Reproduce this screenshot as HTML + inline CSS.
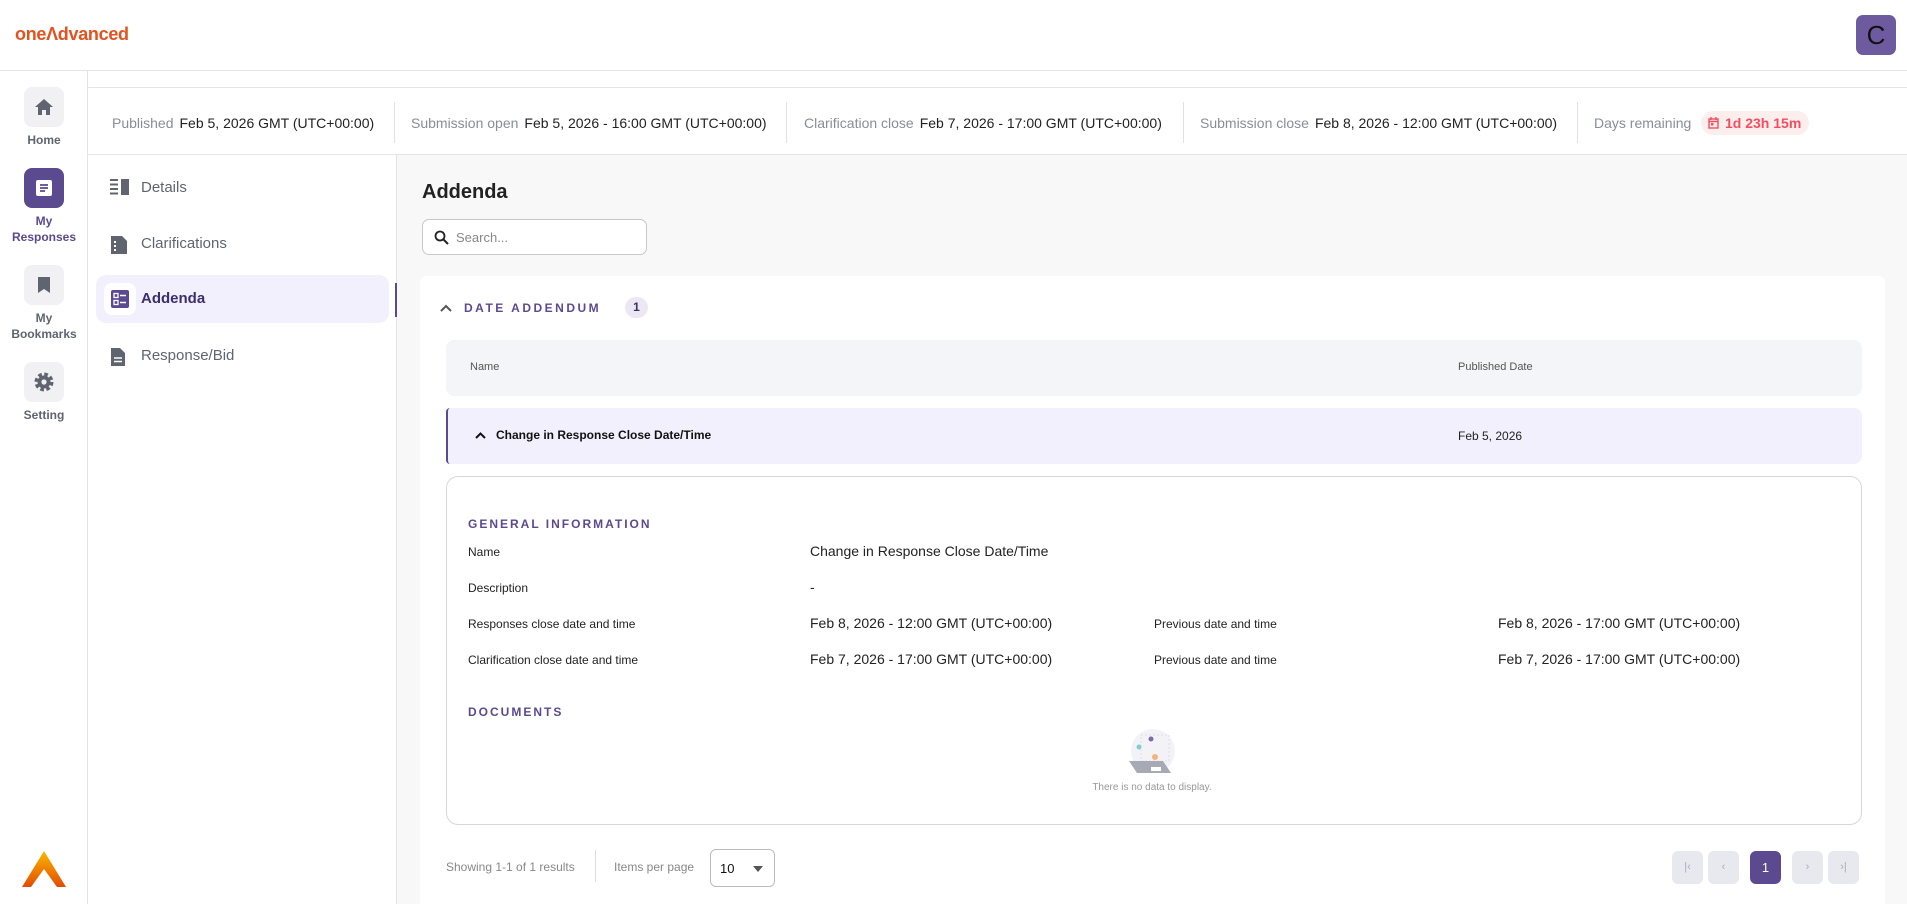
<!DOCTYPE html>
<html><head><meta charset="utf-8"><style>
*{box-sizing:border-box;margin:0;padding:0}
body{width:1907px;height:904px;overflow:hidden;font-family:"Liberation Sans",sans-serif;background:#fff;position:relative;color:#222}
.abs{position:absolute}
.hdr{left:0;top:0;width:1907px;height:71px;border-bottom:1px solid #e3e3ea;background:#fff}
.logo{left:15px;top:24px;font-size:18px;font-weight:bold;color:#e5511f;letter-spacing:-0.3px}
.avatar{left:1856px;top:15px;width:40px;height:40px;border-radius:7px;background:#6e5a9e;color:#111;font-size:26px;text-align:center;line-height:40px}
.rail{left:0;top:71px;width:88px;height:833px;border-right:1px solid #e3e3ea;background:#fff}
.rbox{position:absolute;left:24px;width:40px;height:40px;border-radius:8px;background:#f1f1f3;display:flex;align-items:center;justify-content:center}
.rlab{position:absolute;left:0;width:88px;text-align:center;font-size:12px;font-weight:bold;color:#5f6470;line-height:16px}
.strip{left:88px;top:87px;width:1819px;height:68px;border-top:1px solid #e3e3ea;border-bottom:1px solid #e3e3ea;background:#fff}
.info{position:absolute;top:27px;font-size:14px;color:#222;white-space:nowrap}
.info span{color:#8a8d96;margin-right:6px}
.sep{position:absolute;top:14px;width:1px;height:41px;background:#e0e0e6}
.subnav{left:88px;top:155px;width:309px;height:749px;border-right:1px solid #e3e3ea;background:#fff}
.sn{position:absolute;left:0;width:300px;height:48px;font-size:15px;color:#5f6470}
.sn .t{position:absolute;left:53px;top:15px}
.sn svg{position:absolute;left:22px;top:15px}
.main{left:397px;top:155px;width:1510px;height:749px;background:#f8f8f9}
.card{position:absolute;left:23px;top:121px;width:1465px;height:640px;background:#fff;border-radius:6px}
.th{position:absolute;left:26px;width:1416px;border-radius:8px}
.lbl{position:absolute;font-size:12px;color:#222}
.val{position:absolute;font-size:14px;color:#222}
.sec{position:absolute;left:21px;font-size:12px;font-weight:bold;letter-spacing:2px;color:#5b4a8f}
.pb{position:absolute;top:575px;width:31px;height:33px;border-radius:6px;background:#e8e9ee;color:#aab;font-size:11px;text-align:center;line-height:33px}
</style></head><body>
<div class="abs hdr"></div>
<div class="abs logo">one&#923;dvanced</div>
<div class="abs avatar">C</div>

<div class="abs rail">
 <div class="rbox" style="top:16px"><svg width="20" height="18" viewBox="0 0 20 18"><path d="M10 1L1 9h3v8h4v-5h4v5h4V9h3z" fill="#5f6470"/></svg></div>
 <div class="rlab" style="top:61px">Home</div>
 <div class="rbox" style="top:97px;background:#5b4a8f"><svg width="18" height="18" viewBox="0 0 18 18"><rect x="1" y="1" width="16" height="16" rx="2" fill="#fff"/><path d="M5 6h8M5 9h8M5 12h5" stroke="#5b4a8f" stroke-width="1.8"/></svg></div>
 <div class="rlab" style="top:142px;color:#5b4a8f">My<br>Responses</div>
 <div class="rbox" style="top:194px"><svg width="14" height="18" viewBox="0 0 14 18"><path d="M1 1h12v16l-6-4-6 4z" fill="#5f6470"/></svg></div>
 <div class="rlab" style="top:239px">My<br>Bookmarks</div>
 <div class="rbox" style="top:291px"><svg width="22" height="22" viewBox="0 0 22 22"><circle cx="11" cy="11" r="7.5" fill="none" stroke="#5f6470" stroke-width="4" stroke-dasharray="3.5 2.4"/><circle cx="11" cy="11" r="6.5" fill="#5f6470"/><circle cx="11" cy="11" r="2.6" fill="#f1f1f3"/></svg></div>
 <div class="rlab" style="top:336px">Setting</div>
 <svg style="position:absolute;left:22px;top:780px" width="44" height="36" viewBox="0 0 44 36"><defs><linearGradient id="g" x1="0" y1="0" x2="0" y2="1"><stop offset="0" stop-color="#fbb800"/><stop offset="1" stop-color="#e24c00"/></linearGradient></defs><path d="M22 0L44 36H35L22 18L9 36H0z" fill="url(#g)"/></svg>
</div>

<div class="abs strip">
 <div class="info" style="left:24px"><span>Published</span>Feb 5, 2026 GMT (UTC+00:00)</div>
 <div class="sep" style="left:306px"></div>
 <div class="info" style="left:323px"><span>Submission open</span>Feb 5, 2026 - 16:00 GMT (UTC+00:00)</div>
 <div class="sep" style="left:698px"></div>
 <div class="info" style="left:716px"><span>Clarification close</span>Feb 7, 2026 - 17:00 GMT (UTC+00:00)</div>
 <div class="sep" style="left:1095px"></div>
 <div class="info" style="left:1112px"><span>Submission close</span>Feb 8, 2026 - 12:00 GMT (UTC+00:00)</div>
 <div class="sep" style="left:1489px"></div>
 <div class="info" style="left:1506px"><span>Days remaining</span></div>
 <div style="position:absolute;left:1613px;top:23px;height:24px;padding:0 8px 0 24px;border-radius:12px;background:#fdeeee;color:#ef4f5f;font-weight:bold;font-size:14px;line-height:24px">1d 23h 15m<svg style="position:absolute;left:7px;top:6px" width="11" height="12" viewBox="0 0 11 12"><rect x="1" y="2" width="9" height="9" fill="none" stroke="#ef4f5f" stroke-width="1.4"/><path d="M1 4.5h9M3 0v3M8 0v3" stroke="#ef4f5f" stroke-width="1.4"/><rect x="3" y="6" width="2.5" height="2.5" fill="#ef4f5f"/></svg></div>
</div>

<div class="abs subnav">
 <div class="sn" style="top:9px"><svg width="20" height="16" viewBox="0 0 20 16"><path d="M0 1h8M0 5.5h8M0 10h8M0 14.5h8" stroke="#5f6470" stroke-width="2"/><rect x="11" y="0" width="8" height="16" fill="#5f6470"/></svg><span class="t">Details</span></div>
 <div class="sn" style="top:65px"><svg width="18" height="20" viewBox="0 0 18 20"><path d="M1 1h11l5 5v13H1z" fill="#5f6470"/><rect x="4" y="6" width="2" height="2" fill="#fff"/><rect x="4" y="10" width="2" height="2" fill="#fff"/><rect x="4" y="14" width="2" height="2" fill="#fff"/></svg><span class="t">Clarifications</span></div>
 <div style="position:absolute;left:8px;top:120px;width:293px;height:48px;border-radius:10px;background:#f3f0fd"></div>
 <div style="position:absolute;left:307px;top:128px;width:2px;height:34px;background:#5b4a8f"></div>
 <div class="sn" style="top:120px"><div style="position:absolute;left:16px;top:8px;width:32px;height:32px;border-radius:8px;background:#fff"></div><svg style="left:23px;top:15px" width="18" height="18" viewBox="0 0 18 18"><rect width="18" height="18" rx="2" fill="#5b4a8f"/><rect x="3" y="3.5" width="4" height="4" fill="none" stroke="#fff" stroke-width="1.3"/><rect x="3" y="10.5" width="4" height="4" fill="none" stroke="#fff" stroke-width="1.3"/><path d="M9 5.5h6M9 12.5h6" stroke="#fff" stroke-width="1.4"/></svg><span class="t" style="color:#3c2f6a;font-weight:bold">Addenda</span></div>
 <div class="sn" style="top:177px"><svg width="16" height="20" viewBox="0 0 16 20"><path d="M1 1h9l5 5v13H1z" fill="#5f6470"/><path d="M4 11h8M4 14.5h8" stroke="#fff" stroke-width="1.6"/></svg><span class="t">Response/Bid</span></div>
</div>

<div class="abs main">
 <div style="position:absolute;left:25px;top:26px;font-size:20px;font-weight:bold;color:#222">Addenda</div>
 <div style="position:absolute;left:25px;top:64px;width:225px;height:36px;border:1px solid #c8c8cc;border-radius:7px;background:#fff">
  <svg style="position:absolute;left:11px;top:10px" width="15" height="15" viewBox="0 0 15 15"><circle cx="6" cy="6" r="4.5" fill="none" stroke="#222" stroke-width="1.8"/><path d="M9.5 9.5L14 14" stroke="#222" stroke-width="2"/></svg>
  <span style="position:absolute;left:33px;top:10px;font-size:13px;color:#888">Search...</span></div>
 <div class="card">
  <svg style="position:absolute;left:20px;top:28px" width="12" height="8" viewBox="0 0 12 8"><path d="M1 7l5-5 5 5" fill="none" stroke="#555" stroke-width="2"/></svg>
  <div style="position:absolute;left:44px;top:25px;font-size:12px;font-weight:bold;letter-spacing:2.5px;color:#5b4a8f">DATE ADDENDUM</div>
  <div style="position:absolute;left:205px;top:21px;width:23px;height:21px;border-radius:11px;background:#ebe8f3;color:#3c2f6a;font-size:12px;font-weight:bold;text-align:center;line-height:21px">1</div>
  <div class="th" style="top:64px;height:56px;background:#f4f5f8"><span style="position:absolute;left:24px;top:21px;font-size:11px;color:#555">Name</span><span style="position:absolute;left:1012px;top:21px;font-size:11px;color:#555">Published Date</span></div>
  <div class="th" style="top:132px;height:56px;background:#f3f0fd;border-left:2px solid #5b4a8f;border-radius:4px 8px 8px 4px">
   <svg style="position:absolute;left:27px;top:23px" width="11" height="8" viewBox="0 0 11 8"><path d="M1 7l4.5-4.5L10 7" fill="none" stroke="#111" stroke-width="2"/></svg>
   <span style="position:absolute;left:48px;top:20px;font-size:12px;font-weight:bold;color:#111">Change in Response Close Date/Time</span>
   <span style="position:absolute;left:1010px;top:21px;font-size:12px;color:#222">Feb 5, 2026</span></div>
  <div class="th" style="top:200px;height:349px;border:1px solid #d6d6e2;border-radius:12px;background:#fff">
   <div class="sec" style="top:40px">GENERAL INFORMATION</div>
   <div class="lbl" style="left:21px;top:68px">Name</div><div class="val" style="left:363px;top:66px">Change in Response Close Date/Time</div>
   <div class="lbl" style="left:21px;top:104px">Description</div><div class="val" style="left:363px;top:102px">-</div>
   <div class="lbl" style="left:21px;top:140px">Responses close date and time</div><div class="val" style="left:363px;top:138px">Feb 8, 2026 - 12:00 GMT (UTC+00:00)</div>
   <div class="lbl" style="left:707px;top:140px">Previous date and time</div><div class="val" style="left:1051px;top:138px">Feb 8, 2026 - 17:00 GMT (UTC+00:00)</div>
   <div class="lbl" style="left:21px;top:176px">Clarification close date and time</div><div class="val" style="left:363px;top:174px">Feb 7, 2026 - 17:00 GMT (UTC+00:00)</div>
   <div class="lbl" style="left:707px;top:176px">Previous date and time</div><div class="val" style="left:1051px;top:174px">Feb 7, 2026 - 17:00 GMT (UTC+00:00)</div>
   <div class="sec" style="top:228px">DOCUMENTS</div>
   <svg style="position:absolute;left:680px;top:250px" width="48" height="50" viewBox="0 0 48 50"><circle cx="26" cy="24" r="22" fill="#f3f3f7"/><rect x="14" y="8" width="28" height="26" fill="none" stroke="#dcdce6" stroke-dasharray="2 2"/><circle cx="24" cy="12" r="2.5" fill="#7b6aa8"/><circle cx="12" cy="20" r="2.5" fill="#7fcfcf"/><circle cx="28" cy="30" r="3" fill="#f5b27a"/><path d="M2 34h34l8 12H10z" fill="#a7a9b4"/><rect x="24" y="40" width="10" height="4" fill="#fff"/></svg>
   <div style="position:absolute;left:620px;top:305px;width:170px;text-align:center;font-size:10px;color:#999">There is no data to display.</div>
  </div>
  <div style="position:absolute;left:26px;top:584px;font-size:12px;color:#888">Showing 1-1 of 1 results</div>
  <div style="position:absolute;left:175px;top:574px;width:1px;height:32px;background:#ddd"></div>
  <div style="position:absolute;left:194px;top:584px;font-size:12px;color:#888">Items per page</div>
  <div style="position:absolute;left:290px;top:573px;width:65px;height:38px;border:1px solid #bbb;border-radius:6px;background:#fff"><span style="position:absolute;left:9px;top:11px;font-size:13px;color:#111">10</span><svg style="position:absolute;left:42px;top:16px" width="10" height="6" viewBox="0 0 10 6"><path d="M0 0h10L5 6z" fill="#555"/></svg></div>
  <div class="pb" style="left:1252px">|‹</div>
  <div class="pb" style="left:1288px">‹</div>
  <div class="pb" style="left:1330px;background:#5b4a8f;color:#fff;font-size:13px">1</div>
  <div class="pb" style="left:1372px">›</div>
  <div class="pb" style="left:1408px">›|</div>
 </div>
</div>
</body></html>
